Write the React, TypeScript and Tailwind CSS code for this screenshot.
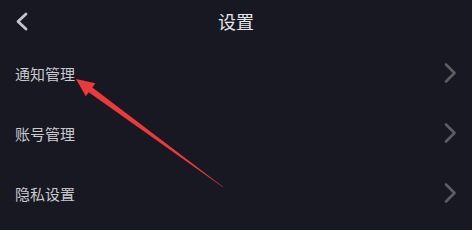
import React from "react";

const rows = ["通知管理", "账号管理", "隐私设置"];

function ChevronRight() {
  return (
    <svg width="14" height="22" viewBox="0 0 14 22" className="block">
      <polyline points="3,2.5 11.5,11 3,19.5" fill="none" stroke="#5b5c64" strokeWidth="2.6" strokeLinecap="round" strokeLinejoin="round" />
    </svg>
  );
}

export default function App() {
  return (
    <div
      className="relative w-[472px] h-[230px] overflow-hidden bg-[#171821]"
      style={{ fontFamily: '"Noto Sans CJK SC", "Noto Sans", sans-serif' }}
    >
      <div className="relative h-[43px] flex items-center justify-center">
        <div className="absolute left-[14px] top-[11px]">
          <svg width="16" height="20" viewBox="0 0 16 20" className="block">
            <polyline points="12,3 4,10.5 12,18" fill="none" stroke="#c4c5ca" strokeWidth="2.8" strokeLinecap="round" strokeLinejoin="round" />
          </svg>
        </div>
        <span className="text-[18px] leading-none text-[#e6e6ea] -mt-[2px]">设置</span>
      </div>
      {rows.map((r) => (
        <div key={r} className="h-[60px] flex items-center justify-between pl-[15px] pr-[15px]">
          <span className="text-[15px] leading-none text-[#c9c9ce]">{r}</span>
          <ChevronRight />
        </div>
      ))}
      <svg className="absolute left-0 top-0 pointer-events-none" width="472" height="230" viewBox="0 0 472 230">
        <polygon points="89.8,85.6 86.2,90.4 223,187.3 223.3,186.9" fill="#ec3a3c" />
        <polygon points="76,79 95.4,83.2 85.8,96.3" fill="#ec3a3c" />
      </svg>
    </div>
  );
}
